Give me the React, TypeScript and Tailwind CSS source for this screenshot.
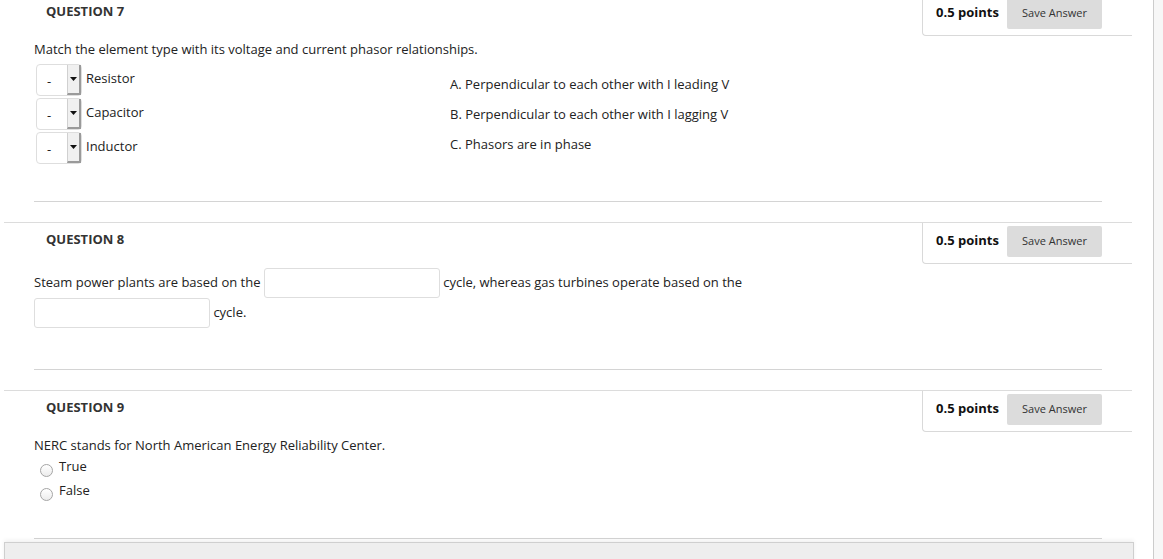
import React from 'react';

const font = { fontFamily: '"Open Sans", "Noto Sans", Arial, sans-serif' };

function QuestionHeader({ number }: { number: number }) {
  return (
    <div className="flex h-[42px] border-t border-[#dcdcdc]">
      <h2 className="pl-[42px] pt-[7px] text-[13px] font-bold leading-[18px] text-[#333]">QUESTION {number}</h2>
      <div className="ml-auto flex h-full w-[210px] items-start rounded-bl-[4px] border-b border-l border-[#d9d9d9] pl-[13px]">
        <span className="pt-[8px] text-[13px] font-bold leading-[18px] text-[#111]">0.5 points</span>
        <button className="ml-auto mr-[30px] mt-[3px] h-[31px] w-[95px] rounded-[2px] bg-[#dcdcdc] text-[11px] text-[#333]">
          Save Answer
        </button>
      </div>
    </div>
  );
}

function MatchSelect({ label }: { label: string }) {
  return (
    <div className="flex items-start">
      <div className="flex h-[32px] w-[46px] rounded-[4px] border border-[#dedede] bg-white">
        <span className="flex-1 pl-[10px] pt-[7px] text-[13px] leading-[18px]">-</span>
        <span className="flex w-[14px] items-center justify-center border-b-2 border-l border-r-2 border-b-[#9a9a9a] border-l-[#d0d0d0] border-r-[#9a9a9a] bg-[#f0f0f0]">
          <svg width="7" height="4" viewBox="0 0 7 4">
            <path d="M0 0h7L3.5 4z" fill="#111" />
          </svg>
        </span>
      </div>
      <span className="ml-[4px] pt-[5px] text-[13px] leading-[18px]">{label}</span>
    </div>
  );
}

function Radio({ label }: { label: string }) {
  return (
    <label className="flex items-start leading-[24px]">
      <span className="ml-[6px] mt-[10px] h-[13px] w-[13px] rounded-full border border-[#a5a5a5] bg-gradient-to-b from-white to-[#ececec]" />
      <span className="ml-[6px]">{label}</span>
    </label>
  );
}

function TextBlank() {
  return (
    <input className="relative top-[1px] inline-block h-[30px] w-[176px] rounded-[3px] border border-[#dedede] bg-white align-top" />
  );
}

export default function App() {
  return (
    <div className="flex h-[559px] w-full overflow-hidden bg-white text-[13px] text-[#222]" style={font}>
      <main className="-mt-[6px] flex-1">
        {/* question 7 */}
        <section className="ml-[4px] w-[1128px]">
          <QuestionHeader number={7} />
          <div className="mx-[30px] h-[166px] border-b border-[#d4d4d4] pt-[4px]">
            <p className="leading-[18px]">Match the element type with its voltage and current phasor relationships.</p>
            <div className="mt-[6px] flex">
              <div className="flex w-[416px] flex-col gap-[2px] pl-[2px]">
                <MatchSelect label="Resistor" />
                <MatchSelect label="Capacitor" />
                <MatchSelect label="Inductor" />
              </div>
              <ul className="pt-[5px] leading-[30px]">
                <li>A. Perpendicular to each other with I leading V</li>
                <li>B. Perpendicular to each other with I lagging V</li>
                <li>C. Phasors are in phase</li>
              </ul>
            </div>
          </div>
        </section>

        {/* question 8 */}
        <section className="ml-[4px] mt-[20px] w-[1128px]">
          <QuestionHeader number={8} />
          <div className="mx-[30px] h-[106px] border-b border-[#d4d4d4] pt-[3px]">
            <p className="max-w-[880px] leading-[30px]">
              Steam power plants are based on the <TextBlank /> cycle, whereas gas turbines operate based on the{' '}
              <TextBlank /> cycle.
            </p>
          </div>
        </section>

        {/* question 9 */}
        <section className="ml-[4px] mt-[20px] w-[1128px]">
          <QuestionHeader number={9} />
          <div className="mx-[30px] h-[107px] border-b border-[#d4d4d4] pt-[4px]">
            <p className="leading-[18px]">NERC stands for North American Energy Reliability Center.</p>
            <Radio label="True" />
            <Radio label="False" />
          </div>
        </section>

        <div className="ml-[4px] mt-[3px] h-[40px] w-[1130px] border border-[#cfcfcf] bg-[#eeeeee] shadow-[0_-2px_4px_rgba(0,0,0,0.06)]" />
      </main>
      <aside className="w-[10px] shrink-0 border-l border-[#cccccc] bg-[#f7f7f7]" />
    </div>
  );
}
